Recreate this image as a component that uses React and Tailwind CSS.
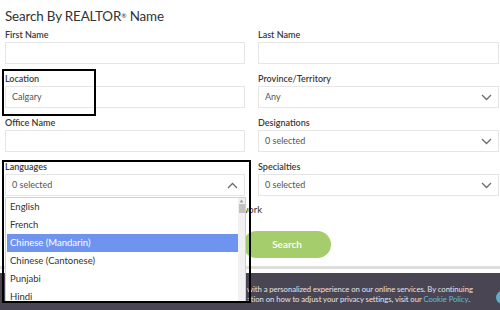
import React from "react";

function Chevron({ up = false }) {
  return (
    <svg width="11" height="7" viewBox="0 0 11 7" className="shrink-0">
      <polyline
        points={up ? "1,6 5.5,1.5 10,6" : "1,1 5.5,5.5 10,1"}
        fill="none"
        stroke="#6b6b6b"
        strokeWidth="1.3"
      />
    </svg>
  );
}

function Field({ label, value, select, up }) {
  return (
    <div className="flex flex-col">
      <div className="text-[9px] leading-[12px] font-semibold text-[#3a3a3a] h-[12px]">{label}</div>
      <div className="mt-[1px] h-[22px] border border-[#e6e6e6] bg-white flex items-center pl-[6px] pr-[6px] justify-between">
        <span className="text-[9px] text-[#555]">{value}</span>
        {select ? <Chevron up={up} /> : null}
      </div>
    </div>
  );
}

export default function App() {
  const langs = ["English", "French", "Chinese (Mandarin)", "Chinese (Cantonese)", "Punjabi", "Hindi"];
  return (
    <div className="relative w-[500px] h-[310px] overflow-hidden bg-white font-['Lato',sans-serif] text-[#333]">
      <div className="pl-[5px] pr-[1px]">
        <h1 className="pt-[8px] text-[13.4px] leading-[16px] tracking-[-0.15px] text-[#333]">
          Search By REALTOR<sup className="text-[6.5px]">®</sup> Name
        </h1>
        <div className="grid grid-cols-[240px_241px] gap-x-[13px] gap-y-[9px] mt-[5px]">
          <Field label="First Name" value="" />
          <Field label="Last Name" value="" />
          <Field label="Location" value="Calgary" />
          <Field label="Province/Territory" value="Any" select />
          <Field label="Office Name" value="" />
          <Field label="Designations" value="0 selected" select />
          <Field label="Languages" value="0 selected" select up />
          <Field label="Specialties" value="0 selected" select />
        </div>
        <div className="mt-[8px] w-[257px] text-right text-[9.5px] leading-[12px] text-[#333]">Network</div>
        <button className="mt-[15px] ml-[238px] w-[88px] h-[27px] rounded-full bg-[#a6cd6c] text-white text-[10px] font-semibold flex items-center justify-center">
          Search
        </button>
      </div>
      <div className="mt-[8px] h-[3px] bg-[#dedede]"></div>
      <div className="mt-[4px] h-[40px] bg-[#4a4552] pt-[11px] pl-[247px] text-[7.7px] leading-[10px] tracking-[-0.05px] text-[#e4e2e8] whitespace-nowrap">
        <div>with a personalized experience on our online services. By continuing</div>
        <div>ation on how to adjust your privacy settings, visit our <span className="text-[#5cbde0]">Cookie Policy</span>.</div>
      </div>
      <div className="absolute left-[496px] top-[291px] w-[13px] h-[13px] rounded-full bg-[#5bafd0]"></div>

      {/* Open dropdown */}
      <div className="absolute left-[5px] top-[197px] w-[241px] h-[106px] bg-white border border-[#d0d0d0] overflow-hidden flex">
        <div className="flex-1 pl-[1px]">
          {langs.map((l, i) => (
            <div
              key={l}
              className={
                i === 2
                  ? "h-[18px] leading-[18px] pl-[3px] text-[9.5px] bg-[#6f94ef] text-white"
                  : "h-[18px] leading-[18px] pl-[3px] text-[9.5px] text-[#333]"
              }
            >
              {l}
            </div>
          ))}
        </div>
        <div className="w-[7px] bg-[#f1f1f1] flex flex-col items-center">
          <svg width="5" height="4" viewBox="0 0 5 4" className="mt-[1px]">
            <polygon points="2.5,0.5 4.5,3.5 0.5,3.5" fill="#a0a0a0" />
          </svg>
          <div className="mt-[1px] w-[6px] h-[9px] bg-[#c1c1c1]"></div>
        </div>
      </div>

      {/* Annotation boxes */}
      <div className="absolute left-[2px] top-[69px] w-[94px] h-[47px] border-2 border-black"></div>
      <div className="absolute left-[2px] top-[160px] w-[249px] h-[143px] border-2 border-black"></div>
    </div>
  );
}
